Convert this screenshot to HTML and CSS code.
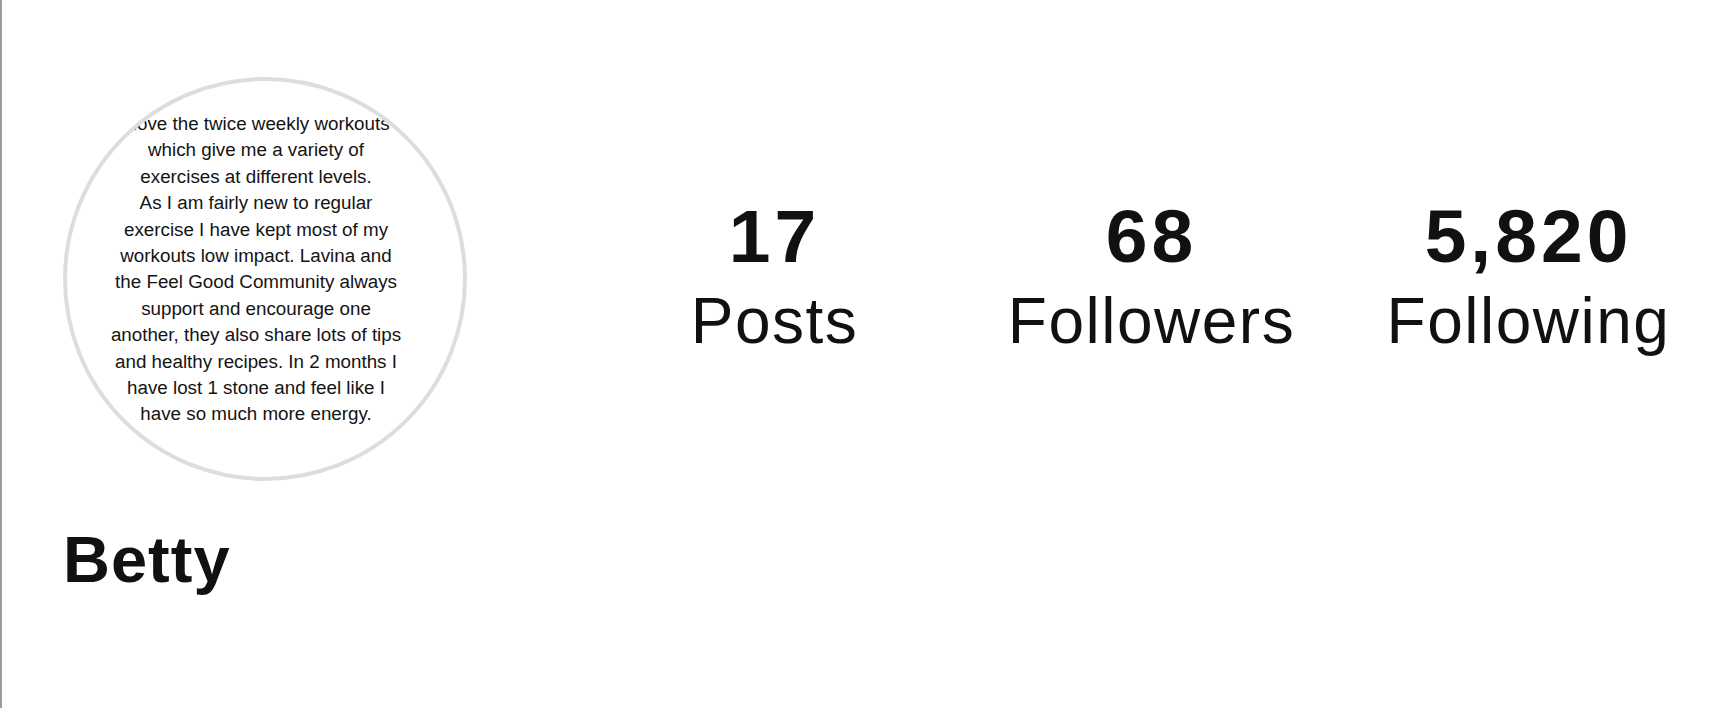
FILE: index.html
```html
<!DOCTYPE html>
<html lang="en">
<head>
<meta charset="utf-8">
<title>Betty</title>
<link rel="stylesheet" href="styles.css">
</head>
<body>
<div class="page">
  <div class="header">
    <div class="avatar">
      <p class="avatar-text">I love the twice weekly workouts<br>which give me a variety of<br>exercises at different levels.<br>As I am fairly new to regular<br>exercise I have kept most of my<br>workouts low impact. Lavina and<br>the Feel Good Community always<br>support and encourage one<br>another, they also share lots of tips<br>and healthy recipes. In 2 months I<br>have lost 1 stone and feel like I<br>have so much more energy.</p>
    </div>
    <div class="stats">
      <div class="stat"><div class="num">17</div><div class="label">Posts</div></div>
      <div class="stat"><div class="num">68</div><div class="label">Followers</div></div>
      <div class="stat"><div class="num">5,820</div><div class="label">Following</div></div>
    </div>
  </div>
  <h1 class="name">Betty</h1>
</div>
</body>
</html>
```

FILE: styles.css
```css
html, body {
  margin: 0;
  padding: 0;
  background: #ffffff;
}
body {
  font-family: "Liberation Sans", Arial, sans-serif;
  color: #111111;
  overflow: hidden;
}
.page {
  box-sizing: border-box;
  min-height: 100vh;
  border-left: 2px solid #9c9c9c;
  padding: 77px 0 0 61px;
}
.header {
  display: flex;
  align-items: flex-start;
}
.avatar {
  flex: none;
  box-sizing: border-box;
  width: 404px;
  height: 404px;
  border: 4px solid #dddddd;
  border-radius: 50%;
  overflow: hidden;
  display: flex;
  justify-content: center;
}
.avatar-text {
  margin: 30px 0 0 -18px;
  white-space: nowrap;
  text-align: center;
  font-family: "Liberation Sans", Arial, sans-serif;
  font-size: 18.8px;
  line-height: 26.4px;
  color: #141414;
}
.stats {
  display: grid;
  grid-template-columns: repeat(3, 377px);
  margin: 119px 0 0 119px;
}
.stat {
  display: flex;
  flex-direction: column;
  align-items: center;
}
.num {
  font-size: 75px;
  line-height: 80px;
  font-weight: 700;
  letter-spacing: 4px;
}
.label {
  margin-top: 9px;
  font-size: 64px;
  line-height: 72px;
  font-weight: 400;
  letter-spacing: 1.5px;
}
.name {
  margin: 41px 0 0 0;
  font-size: 65px;
  line-height: 75px;
  font-weight: 700;
  letter-spacing: 1px;
}
```
